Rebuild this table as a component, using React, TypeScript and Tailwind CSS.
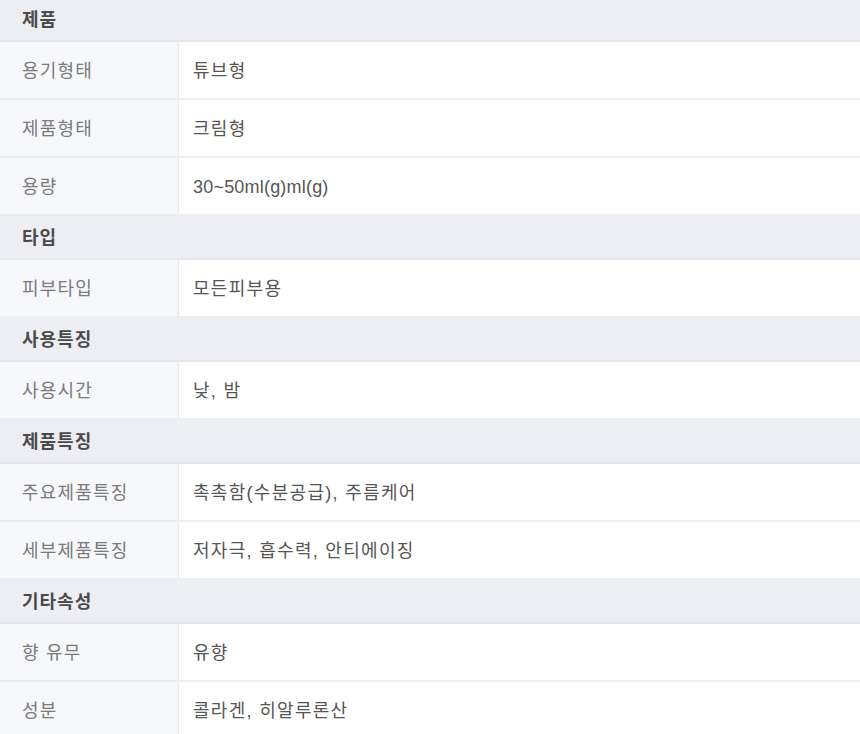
const sections: { title: string; rows: [string, string][] }[] = [
  {
    title: "제품",
    rows: [
      ["용기형태", "튜브형"],
      ["제품형태", "크림형"],
      ["용량", "30~50ml(g)ml(g)"],
    ],
  },
  { title: "타입", rows: [["피부타입", "모든피부용"]] },
  { title: "사용특징", rows: [["사용시간", "낮, 밤"]] },
  {
    title: "제품특징",
    rows: [
      ["주요제품특징", "촉촉함(수분공급), 주름케어"],
      ["세부제품특징", "저자극, 흡수력, 안티에이징"],
    ],
  },
  {
    title: "기타속성",
    rows: [
      ["향 유무", "유향"],
      ["성분", "콜라겐, 히알루론산"],
    ],
  },
];

// latin-only values look tighter than the hangul ones
const isLatin = (s: string) => /^[\x00-\x7F]+$/.test(s);

export default function App() {
  return (
    <div
      className="w-[860px] h-[734px] overflow-hidden bg-white"
      style={{ fontFamily: '"Liberation Sans", "Noto Sans CJK KR", sans-serif' }}
    >
      <div className="-mt-[2px]">
        {sections.map((section) => (
          <div key={section.title}>
            <div className="h-[44px] flex items-center pt-[3px] px-[22px] bg-[#eceef3] border-b-2 border-[#e4e6eb] text-[18px] tracking-[1px] font-bold text-[#4a4a4a]">
              {section.title}
            </div>
            {section.rows.map(([label, value]) => (
              <div key={label} className="h-[58px] flex border-b-2 border-[#eceef0]">
                <div className="w-[179px] shrink-0 flex items-center pt-[3px] px-[22px] bg-[#f7f8fb] border-r border-[#e6e8ec] text-[18px] tracking-[1.2px] text-[#7a7a7a]">
                  {label}
                </div>
                <div
                  className={
                    isLatin(value)
                      ? "flex-1 flex items-center pt-[3px] px-[14px] text-[18px] tracking-[0.2px] text-[#555]"
                      : "flex-1 flex items-center pt-[3px] px-[14px] text-[18px] tracking-[1.3px] text-[#555]"
                  }
                >
                  {value}
                </div>
              </div>
            ))}
          </div>
        ))}
      </div>
    </div>
  );
}
